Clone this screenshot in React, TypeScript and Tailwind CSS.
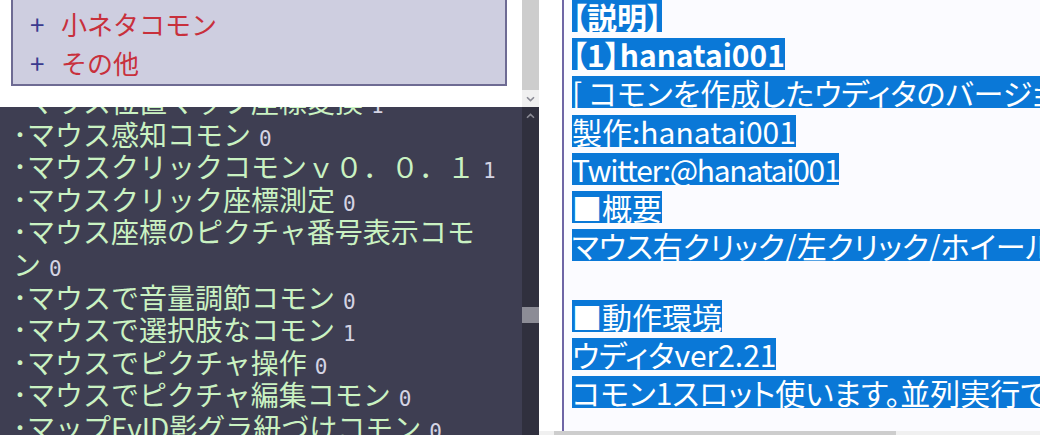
const jp = "font-['Noto_Sans_CJK_JP',sans-serif]"

const commons: { name: string; wrap?: string; count: number }[] = [
  { name: "マウス位置マップ座標変換", count: 1 },
  { name: "マウス感知コモン", count: 0 },
  { name: "マウスクリックコモンｖ０．０．１", count: 1 },
  { name: "マウスクリック座標測定", count: 0 },
  { name: "マウス座標のピクチャ番号表示コモ", wrap: "ン", count: 0 },
  { name: "マウスで音量調節コモン", count: 0 },
  { name: "マウスで選択肢なコモン", count: 1 },
  { name: "マウスでピクチャ操作", count: 0 },
  { name: "マウスでピクチャ編集コモン", count: 0 },
  { name: "マップEvID影グラ紐づけコモン", count: 0 },
]

const lines: { text: string; bold?: boolean; blank?: boolean; tight?: boolean }[] = [
  { text: "【説明】", bold: true },
  { text: "【1】hanatai001", bold: true },
  { text: "[ コモンを作成したウディタのバージョン ]" },
  { text: "製作:hanatai001" },
  { text: "Twitter:@hanatai001", tight: true },
  { text: "■概要" },
  { text: "マウス右クリック/左クリック/ホイール操作を取得します" },
  { text: "", blank: true },
  { text: "■動作環境" },
  { text: "ウディタver2.21" },
  { text: "コモン1スロット使います。並列実行です" },
]

function Chevron({ up }: { up?: boolean }) {
  return (
    <svg width="9" height="6" viewBox="0 0 9 6" className={up ? "rotate-180" : ""}>
      <path d="M1 1.2 L4.5 4.6 L8 1.2" fill="none" stroke="#8b8b95" strokeWidth="1.6" />
    </svg>
  )
}

export default function App() {
  return (
    <div className={`flex w-[1040px] h-[435px] overflow-hidden bg-white ${jp}`}>
      {/* left column */}
      <div className="flex flex-col w-[539px] shrink-0">
        <div className="flex h-[107px] shrink-0 bg-white">
          <div className="flex-1 overflow-hidden">
            <div className="ml-[11px] w-[496px] mt-[-10px] border-2 border-[#6e6b93] bg-[#cecee0] pt-[11.5px] pb-[2px] pl-[17px]">
              {["小ネタコモン", "その他"].map((t) => (
                <div key={t} className="flex items-center h-[39px] text-[26px]">
                  <span className="w-[31px] text-[#3b3b8f]">+</span>
                  <span className="text-[#c8303c]">{t}</span>
                </div>
              ))}
            </div>
          </div>
          <div className="w-[17px] flex flex-col">
            <div className="h-[90px] bg-[#cdcdcd]" />
            <div className="flex-1 bg-[#f0f0f0] flex items-center justify-center">
              <Chevron />
            </div>
          </div>
        </div>

        <div className="flex flex-1 min-h-0 bg-[#3e3e52]">
          <div className="flex-1 overflow-hidden pl-[13px]">
            <div className="mt-[-22px] text-[28px] leading-[32.6px] text-[#caf2c2]">
              {commons.map((c) => (
                <div key={c.name}>
                  ･{c.name}
                  {c.wrap && <br />}
                  {c.wrap}
                  <span className="ml-[8px] text-[21px] leading-none text-[#d4d4e4] font-['DejaVu_Sans_Mono',monospace]">
                    {c.count}
                  </span>
                </div>
              ))}
            </div>
          </div>
          <div className="w-[17px] flex flex-col bg-[#30303e]">
            <div className="h-[18px] flex items-center justify-center">
              <Chevron up />
            </div>
            <div className="h-[182px]" />
            <div className="h-[16px] bg-[#8c8c96]" />
          </div>
        </div>
      </div>

      {/* right column */}
      <div className="flex flex-col flex-1 min-w-0">
        <div className="flex flex-1 min-h-0">
          <div className="w-[23px] shrink-0 bg-white" />
          <div className="flex-1 min-w-0 overflow-hidden border-l-2 border-[#6f66a6] bg-[#fbfbff] pl-[8px]">
            <div className="flex flex-col gap-[6.2px] text-[30px] text-white [font-feature-settings:'palt']">
              {lines.map((l, i) =>
                l.blank ? (
                  <div key={i} className="h-[26.6px]" />
                ) : (
                  <div key={i} className="flex h-[32px] whitespace-nowrap">
                    <span
                      className={`h-[32px] leading-[32px] bg-[#0a78d7] ${l.bold ? "font-bold" : ""} ${l.tight ? "tracking-[-1.3px]" : ""}`}
                    >
                      {l.text}
                    </span>
                  </div>
                )
              )}
            </div>
          </div>
        </div>
        <div className="flex h-[4px] shrink-0 bg-[#f0f0f0]">
          <div className="w-[15px]" />
          <div className="w-[342px] bg-[#cdcdcd]" />
        </div>
      </div>
    </div>
  )
}
